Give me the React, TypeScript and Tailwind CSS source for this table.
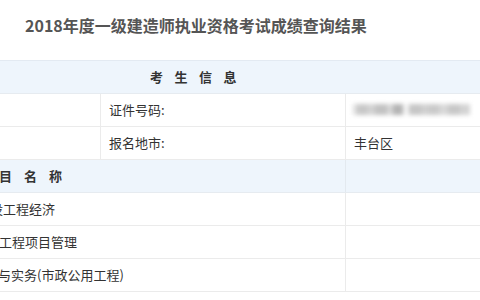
import React from "react";

const font = { fontFamily: '"Noto Sans CJK SC", "Noto Sans", sans-serif' };

function Blur() {
  const segs = [
    { w: 4, c: "#dedede" },
    { w: 10, c: "#c8c8c8" },
    { w: 8, c: "#d2d2d2" },
    { w: 12, c: "#c2c2c2" },
    { w: 6, c: "#d6d6d6" },
    { w: 10, c: "#b4b4b4" },
    { w: 6, c: "#f4f4f4" },
    { w: 12, c: "#c6c6c6" },
    { w: 8, c: "#d0d0d0" },
    { w: 10, c: "#cacaca" },
    { w: 9, c: "#d8d8d8" },
    { w: 12, c: "#c8c8c8" },
    { w: 10, c: "#d4d4d4" },
  ];
  return (
    <div className="flex h-[11px] blur-[2px] ml-[7px] mt-[-2px]">
      {segs.map((s, i) => (
        <div key={i} style={{ width: s.w, background: s.c }} />
      ))}
    </div>
  );
}

export default function App() {
  return (
    <div className="w-[480px] h-[300px] bg-white overflow-hidden" style={font}>
      <div className="h-[60px] pl-[25px] pt-[13px]">
        <div className="text-[16px] leading-[24px] font-bold text-[#555555]">
          2018年度一级建造师执业资格考试成绩查询结果
        </div>
      </div>
      <div className="border-t border-[#e3eaf2] text-[13px] text-[#333333]">
        <div className="h-[33px] bg-[#eef5fc] border-b border-[#e6ebf0] flex items-center">
          <div className="w-[346px] flex justify-center pl-[52px] font-bold tracking-[11.5px] text-[#333]">
            考生信息
          </div>
        </div>
        <div className="h-[33px] border-b border-[#ebebeb] flex">
          <div className="w-[101px] border-r border-[#ebebeb]" />
          <div className="w-[245px] border-r border-[#ebebeb] flex items-center pl-[8px]">证件号码:</div>
          <div className="flex-1 flex items-center">
            <Blur />
          </div>
        </div>
        <div className="h-[33px] border-b border-[#ebebeb] flex">
          <div className="w-[101px] border-r border-[#ebebeb]" />
          <div className="w-[245px] border-r border-[#ebebeb] flex items-center pl-[8px]">报名地市:</div>
          <div className="flex-1 flex items-center pl-[8px]">丰台区</div>
        </div>
        <div className="h-[33px] bg-[#eef5fc] border-b border-[#e6ebf0] flex">
          <div className="w-[346px] border-r border-[#e3e9ef] flex items-center overflow-hidden">
            <span className="ml-[-26px] font-bold tracking-[12px] whitespace-nowrap">科目名称</span>
          </div>
          <div className="flex-1" />
        </div>
        <div className="h-[33px] border-b border-[#ebebeb] flex">
          <div className="w-[346px] border-r border-[#ebebeb] flex items-center overflow-hidden">
            <span className="ml-[-23px] whitespace-nowrap">建设工程经济</span>
          </div>
          <div className="flex-1" />
        </div>
        <div className="h-[33px] border-b border-[#ebebeb] flex">
          <div className="w-[346px] border-r border-[#ebebeb] flex items-center overflow-hidden">
            <span className="ml-[-27px] whitespace-nowrap">建设工程项目管理</span>
          </div>
          <div className="flex-1" />
        </div>
        <div className="h-[33px] border-b border-[#ebebeb] flex">
          <div className="w-[346px] border-r border-[#ebebeb] flex items-center overflow-hidden">
            <span className="ml-[-80px] whitespace-nowrap">专业工程管理与实务(市政公用工程)</span>
          </div>
          <div className="flex-1" />
        </div>
      </div>
    </div>
  );
}
